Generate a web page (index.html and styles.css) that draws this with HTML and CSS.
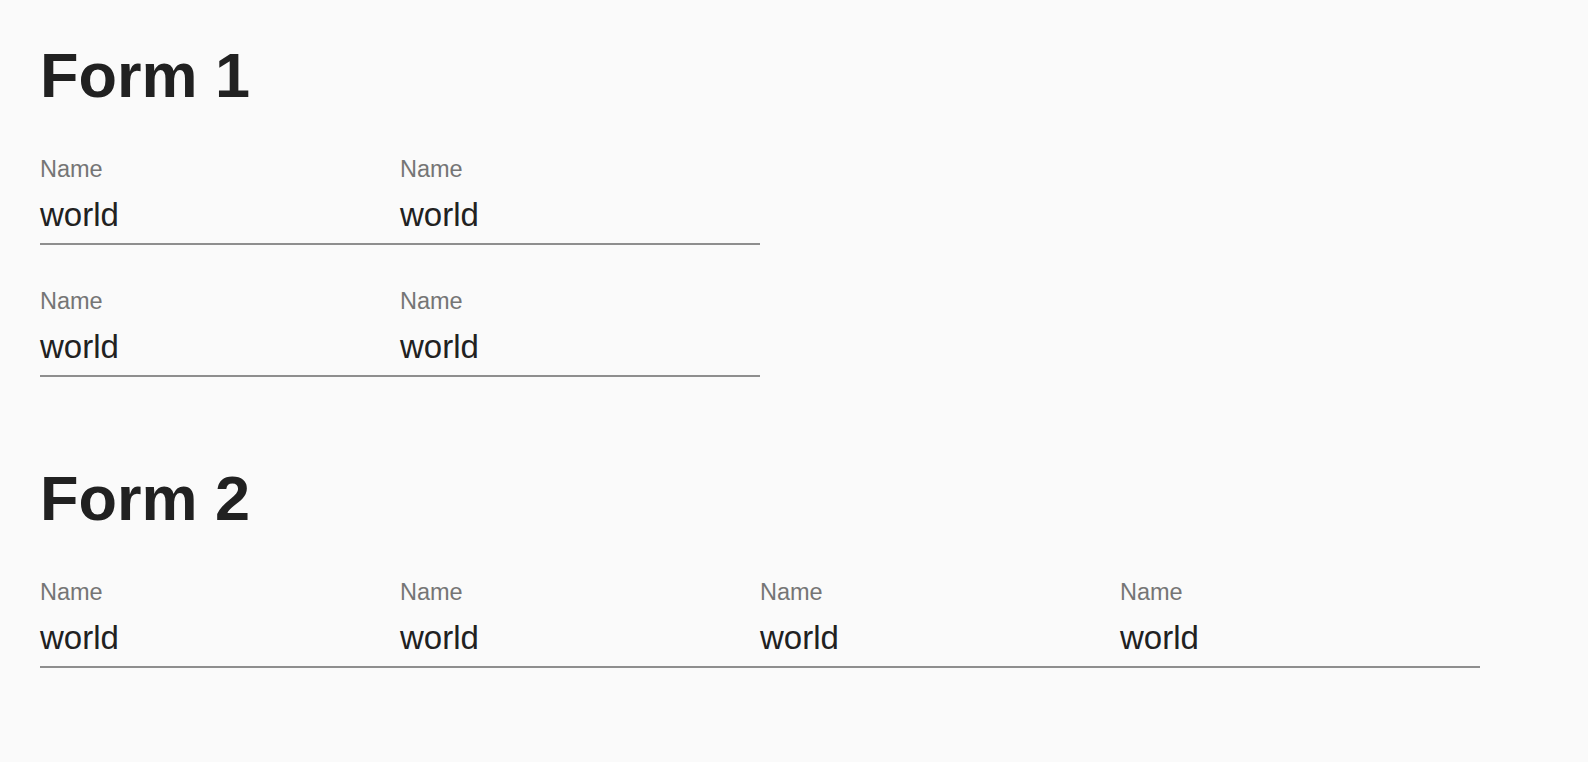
FILE: index.html
```html
<!DOCTYPE html>
<html lang="en">
<head>
<meta charset="utf-8">
<title>Forms</title>
<link rel="stylesheet" href="styles.css">
</head>
<body>
  <section class="form form-first">
    <h1 class="form-title">Form 1</h1>
    <div class="row">
      <div class="field"><div class="label">Name</div><div class="value">world</div></div>
      <div class="field"><div class="label">Name</div><div class="value">world</div></div>
    </div>
    <div class="row">
      <div class="field"><div class="label">Name</div><div class="value">world</div></div>
      <div class="field"><div class="label">Name</div><div class="value">world</div></div>
    </div>
  </section>
  <section class="form">
    <h1 class="form-title">Form 2</h1>
    <div class="row">
      <div class="field"><div class="label">Name</div><div class="value">world</div></div>
      <div class="field"><div class="label">Name</div><div class="value">world</div></div>
      <div class="field"><div class="label">Name</div><div class="value">world</div></div>
      <div class="field"><div class="label">Name</div><div class="value">world</div></div>
    </div>
  </section>
</body>
</html>
```
FILE: styles.css
```css
html, body {
  margin: 0;
  padding: 0;
  background: #fafafa;
}
body {
  font-family: "Liberation Sans", Arial, Helvetica, sans-serif;
  color: #212121;
  padding: 0 40px;
}
.form {
  display: flex;
  flex-direction: column;
  align-items: flex-start;
  gap: 42px;
  margin-top: 84px;
}
.form-first {
  margin-top: 0;
  padding-top: 38px;
}
.form-title {
  margin: 0 0 1px;
  font-size: 63px;
  line-height: 74px;
  font-weight: bold;
  color: #212121;
}
.row {
  display: flex;
  border-bottom: 2px solid #8e8e8e;
  padding-bottom: 8px;
}
.field {
  width: 360px;
  display: flex;
  flex-direction: column;
  gap: 12px;
}
.label {
  font-size: 23.5px;
  line-height: 28px;
  color: #757575;
}
.value {
  font-size: 33px;
  line-height: 40px;
  color: #212121;
}
```
